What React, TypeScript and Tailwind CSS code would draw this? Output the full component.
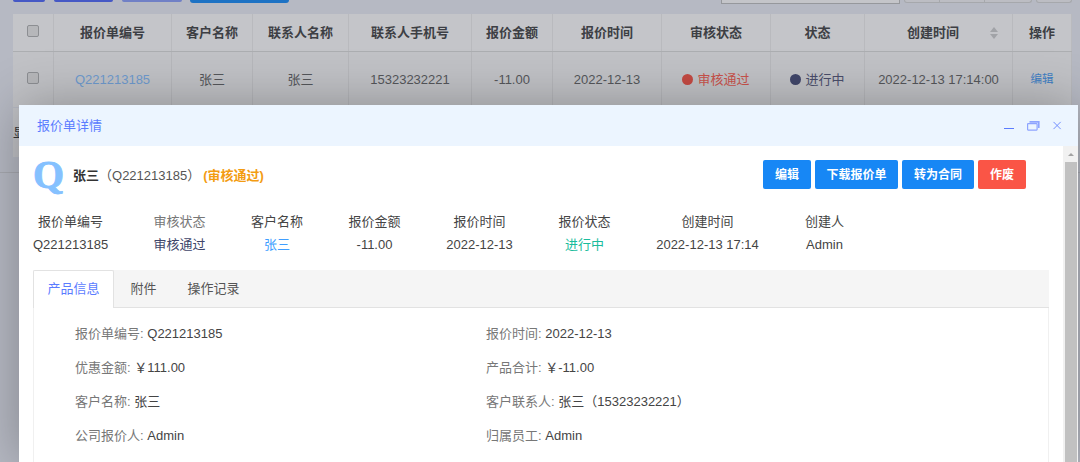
import React, { useState } from 'react';
import clsx from 'clsx';

const columns = [
  { title: '报价单编号', value: 'Q221213185', color: 'text-[#6f9bcf]' },
  { title: '客户名称', value: '张三' },
  { title: '联系人名称', value: '张三' },
  { title: '联系人手机号', value: '15323232221' },
  { title: '报价金额', value: '-11.00' },
  { title: '报价时间', value: '2022-12-13' },
  { title: '审核状态', value: '审核通过', color: 'text-[#c9534c]', dot: 'bg-[#c44a43]' },
  { title: '状态', value: '进行中', color: 'text-[#4a4e6b]', dot: 'bg-[#40466a]' },
  { title: '创建时间', value: '2022-12-13 17:14:00', sortable: true },
  { title: '操作', value: '编辑', color: 'text-[#3f7fc4] text-[11.5px]' },
];

const summary = [
  { label: '报价单编号', value: 'Q221213185', width: 'w-[75px]' },
  { label: '审核状态', value: '审核通过', width: 'w-[52px]', labelColor: 'text-[#777]', color: 'text-[#40466a]' },
  { label: '客户名称', value: '张三', width: 'w-[52px]', color: 'text-[#409eff]' },
  { label: '报价金额', value: '-11.00', width: 'w-[52px]' },
  { label: '报价时间', value: '2022-12-13', width: 'w-[67px]' },
  { label: '报价状态', value: '进行中', width: 'w-[52px]', color: 'text-[#1abc9c]' },
  { label: '创建时间', value: '2022-12-13 17:14', width: 'w-[103px]' },
  { label: '创建人', value: 'Admin', width: 'w-[40px]' },
];

const details = [
  ['报价单编号', 'Q221213185'],
  ['报价时间', '2022-12-13'],
  ['优惠金额', '￥111.00'],
  ['产品合计', '￥-11.00'],
  ['客户名称', '张三'],
  ['客户联系人', '张三（15323232221）'],
  ['公司报价人', 'Admin'],
  ['归属员工', 'Admin'],
];

const tabs = ['产品信息', '附件', '操作记录'];

const gridCols =
  'grid grid-cols-[41px_118px_81px_96px_123px_81px_109px_109px_94px_148px_59px]';

function Checkbox() {
  return <span className="block h-3 w-3 rounded-[2px] border border-[#8c8e92] bg-[#b6b7ba]" />;
}

function Toolbar() {
  return (
    <div className="flex h-[14px] items-start pl-[13px]">
      <div className="h-[2px] w-8 rounded-b-[3px] bg-[#4558c5]" />
      <div className="ml-[9px] h-[2px] w-[59px] rounded-b-[3px] bg-[#4558c5]" />
      <div className="ml-[9px] h-[2px] w-[60px] rounded-b-[3px] bg-[#7080c6]" />
      <div className="ml-2 h-[3px] w-[99px] rounded-b-[3px] bg-[#1d72c4]" />
      <div className="ml-[432px] h-1 w-[179px] border border-t-0 border-[#96989c] bg-[#c4c5c9]" />
      <div className="ml-1 flex h-[3px] w-[128px] rounded-b-[3px] border border-t-0 border-[#a6a8ac] bg-[#bcbdc3]">
        <div className="w-[35px] border-r border-[#a6a8ac]" />
        <div className="w-[45px] border-r border-[#a6a8ac]" />
      </div>
      <div className="ml-1 h-[3px] w-9 rounded-b-[3px] border border-t-0 border-[#a6a8ac] bg-[#bcbdc3]" />
    </div>
  );
}

function QuoteTable() {
  return (
    <div className="ml-[13px] w-[1059px] bg-[#c1c2c6]">
      <div className={clsx(gridCols, 'h-[38px] border-b border-[#acaeb1] bg-[#c4c5c9] font-bold text-[#3d3f44]')}>
        <div className="flex items-center justify-center border-r border-[#b9babe] pb-[3px]">
          <Checkbox />
        </div>
        {columns.map((col) => (
          <div
            key={col.title}
            className={clsx(
              'relative flex items-center justify-center border-r border-[#b9babe]',
              col.sortable && 'pr-[11px]'
            )}
          >
            {col.title}
            {col.sortable && (
              <span className="absolute right-[14px] flex flex-col gap-[2px]">
                <i className="border-x-4 border-b-[5px] border-x-transparent border-b-[#a1a3a7]" />
                <i className="border-x-4 border-t-[5px] border-x-transparent border-t-[#a1a3a7]" />
              </span>
            )}
          </div>
        ))}
      </div>
      <div className={clsx(gridCols, 'h-[55px] text-[#55575b]')}>
        <div className="flex items-center justify-center border-r border-[#b6b7bb] pb-[3px]">
          <Checkbox />
        </div>
        {columns.map((col) => (
          <div
            key={col.title}
            className={clsx('flex items-center justify-center border-r border-[#b6b7bb]', col.color)}
          >
            {col.dot && <span className={clsx('mr-1 h-[11px] w-[11px] rounded-full', col.dot)} />}
            {col.value}
          </div>
        ))}
      </div>
    </div>
  );
}

function DialogHeader() {
  return (
    <div className="flex h-[41px] items-center justify-between bg-[#ecf5ff] pr-[15px] pl-[18px] text-[#5b7cff]">
      <span>报价单详情</span>
      <svg width="60" height="16" viewBox="0 0 60 16" fill="none" stroke="currentColor">
        <path d="M1 10.5h10" />
        <g stroke="#8ea4ff">
          <rect x="24.6" y="5.6" width="9.5" height="6.5" rx="0.5" strokeWidth="1.2" />
          <path d="M26.5 3.9h9.3v6" strokeWidth="1.6" />
        </g>
        <path d="M50.5 3.9l7.2 7.2M57.7 3.9l-7.2 7.2" stroke="#738fff" />
      </svg>
    </div>
  );
}

function DetailDialog() {
  const [activeTab, setActiveTab] = useState(tabs[0]);

  return (
    <div className="absolute top-[105px] left-[19px] flex h-[357px] w-[1059px] flex-col bg-white shadow-[1px_1px_50px_rgba(0,0,0,0.3)]">
      <DialogHeader />
      <div className="flex min-h-0 flex-1">
        <div className="min-w-0 flex-1 pr-[14px] pl-[14px]">
          {/* Title row */}
          <div className="flex h-[60px] items-center">
            <span className="w-10 pb-[2px] font-['Liberation_Serif'] text-[40px] leading-[40px] font-bold text-[#85c1ff] [-webkit-text-stroke:0.8px_#85c1ff]">
              Q
            </span>
            <span className="font-bold text-[#333]">张三</span>
            <span className="text-[#555]">（Q221213185）</span>
            <span className="ml-[3px] font-bold text-[#f39c12]">(审核通过)</span>
            <div className="mr-[23px] ml-auto flex gap-1 pb-[3px] text-[12px] font-bold text-white">
              <button className="h-[29px] w-12 rounded-[2px] bg-[#1787f5]">编辑</button>
              <button className="h-[29px] w-[83px] rounded-[2px] bg-[#1787f5]">下载报价单</button>
              <button className="h-[29px] w-[72px] rounded-[2px] bg-[#1787f5]">转为合同</button>
              <button className="h-[29px] w-12 rounded-[2px] bg-[#fa5546]">作废</button>
            </div>
          </div>

          {/* Summary */}
          <div className="flex gap-[45.5px] pt-1 pb-[14px] text-[#444]">
            {summary.map((item) => (
              <div key={item.label} className={clsx('text-center leading-[23px] whitespace-nowrap', item.width)}>
                <p className={item.labelColor}>{item.label}</p>
                <p className={item.color}>{item.value}</p>
              </div>
            ))}
          </div>

          {/* Tabs */}
          <div className="flex h-[38px] bg-[#f5f5f5] shadow-[inset_0_-1px_0_#e2e2e2]">
            {tabs.map((tab) => (
              <button
                key={tab}
                onClick={() => setActiveTab(tab)}
                className={clsx(
                  tab === activeTab
                    ? 'mr-px w-[81px] rounded-t-[2px] border border-b-0 border-[#e2e2e2] bg-white pb-px text-[#5b7cff]'
                    : 'px-[15.5px] text-[#555]'
                )}
              >
                {tab}
              </button>
            ))}
          </div>
          <div className="grid h-[154px] grid-cols-[411px_1fr] content-start border-x border-[#f0f0f0] pt-[9px] pl-[41px]">
            {details.map(([label, value]) => (
              <p key={label} className="leading-[34px] text-[#444]">
                <span className="text-[#777]">{label}:</span> {value}
              </p>
            ))}
          </div>
        </div>

        {/* Scrollbar */}
        <div className="flex w-[15px] flex-col items-center bg-[#f1f1f1] pt-[7px]">
          <i className="border-x-[3px] border-b-[3px] border-x-transparent border-b-[#a3a3a3]" />
          <div className="mt-[6px] w-3 flex-1 bg-[#c1c1c1]" />
        </div>
      </div>
    </div>
  );
}

function App() {
  return (
    <div className="relative h-[462px] w-[1080px] overflow-hidden bg-[#b6b9c3] font-['Liberation_Sans','Noto_Sans_CJK_SC',sans-serif] text-[13px]">
      <Toolbar />
      <QuoteTable />
      <div className="mt-[1px] ml-[13px] flex h-[49px] w-[1059px] items-center bg-[#c1c2c6] text-[#33353a]">
        <span>显示</span>
      </div>
      <div className="mt-[15px] h-px bg-[#a7a9b0]" />
      <DetailDialog />
    </div>
  );
}

export default App;
